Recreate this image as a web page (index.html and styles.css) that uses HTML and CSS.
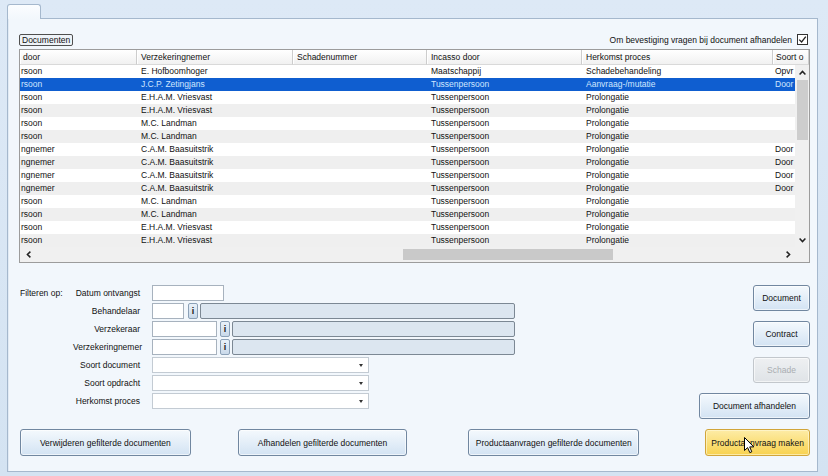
FILE: index.html
```html
<!DOCTYPE html>
<html lang="nl">
<head>
<meta charset="utf-8">
<title>Documenten</title>
<link rel="stylesheet" href="styles.css">
</head>
<body>
<div class="window">
  <div class="tabstrip"><div class="tab"></div></div>
  <div class="panel">
    <div class="grid-head">
      <span class="group-label">Documenten</span>
      <label class="confirm">Om bevestiging vragen bij document afhandelen
        <span class="checkbox"><svg width="9" height="9" viewBox="0 0 9 9"><path d="M1.2 4.6 L3.6 7 L7.8 1.6" fill="none" stroke="#222" stroke-width="1.3"/></svg></span>
      </label>
    </div>

    <div class="datagrid">
      <div class="dg-header">
        <div class="first">door</div>
        <div>Verzekeringnemer</div>
        <div>Schadenummer</div>
        <div>Incasso door</div>
        <div>Herkomst proces</div>
        <div class="last">Soort o</div>
      </div>
      <div class="dg-body">
        <div class="dg-rows">
          <div class="row"><span>rsoon</span><span>E. Hofboomhoger</span><span></span><span>Maatschappij</span><span>Schadebehandeling</span><span>Opvr</span></div>
          <div class="row sel"><span>rsoon</span><span>J.C.P. Zetingjans</span><span></span><span>Tussenpersoon</span><span>Aanvraag-/mutatie</span><span>Door</span></div>
          <div class="row"><span>rsoon</span><span>E.H.A.M. Vriesvast</span><span></span><span>Tussenpersoon</span><span>Prolongatie</span><span></span></div>
          <div class="row"><span>rsoon</span><span>E.H.A.M. Vriesvast</span><span></span><span>Tussenpersoon</span><span>Prolongatie</span><span></span></div>
          <div class="row"><span>rsoon</span><span>M.C. Landman</span><span></span><span>Tussenpersoon</span><span>Prolongatie</span><span></span></div>
          <div class="row"><span>rsoon</span><span>M.C. Landman</span><span></span><span>Tussenpersoon</span><span>Prolongatie</span><span></span></div>
          <div class="row"><span>ngnemer</span><span>C.A.M. Baasuitstrik</span><span></span><span>Tussenpersoon</span><span>Prolongatie</span><span>Door</span></div>
          <div class="row"><span>ngnemer</span><span>C.A.M. Baasuitstrik</span><span></span><span>Tussenpersoon</span><span>Prolongatie</span><span>Door</span></div>
          <div class="row"><span>ngnemer</span><span>C.A.M. Baasuitstrik</span><span></span><span>Tussenpersoon</span><span>Prolongatie</span><span>Door</span></div>
          <div class="row"><span>ngnemer</span><span>C.A.M. Baasuitstrik</span><span></span><span>Tussenpersoon</span><span>Prolongatie</span><span>Door</span></div>
          <div class="row"><span>rsoon</span><span>M.C. Landman</span><span></span><span>Tussenpersoon</span><span>Prolongatie</span><span></span></div>
          <div class="row"><span>rsoon</span><span>M.C. Landman</span><span></span><span>Tussenpersoon</span><span>Prolongatie</span><span></span></div>
          <div class="row"><span>rsoon</span><span>E.H.A.M. Vriesvast</span><span></span><span>Tussenpersoon</span><span>Prolongatie</span><span></span></div>
          <div class="row"><span>rsoon</span><span>E.H.A.M. Vriesvast</span><span></span><span>Tussenpersoon</span><span>Prolongatie</span><span></span></div>
        </div>
        <div class="vscroll">
          <div class="arrow"><svg width="7" height="5" viewBox="0 0 7 5"><path d="M0.6 4.4 L3.5 1.4 L6.4 4.4" fill="none" stroke="#222" stroke-width="1.5"/></svg></div>
          <div class="vtrack"><div class="vthumb"></div></div>
          <div class="arrow"><svg width="7" height="5" viewBox="0 0 7 5"><path d="M0.6 0.6 L3.5 3.6 L6.4 0.6" fill="none" stroke="#222" stroke-width="1.5"/></svg></div>
        </div>
      </div>
      <div class="hscroll">
        <div class="harrow left"><svg width="5" height="7" viewBox="0 0 5 7"><path d="M4.4 0.6 L1.4 3.5 L4.4 6.4" fill="none" stroke="#222" stroke-width="1.5"/></svg></div>
        <div class="htrack"><div class="hthumb"></div></div>
        <div class="harrow"><svg width="5" height="7" viewBox="0 0 5 7"><path d="M0.6 0.6 L3.6 3.5 L0.6 6.4" fill="none" stroke="#222" stroke-width="1.5"/></svg></div>
        <div class="corner"></div>
      </div>
    </div>

    <div class="filters">
      <div class="filter-form">
        <span class="filter-title">Filteren op:</span>
        <span class="flabel">Datum ontvangst</span>
        <div class="ctrl"><span class="field date"></span></div>

        <span class="flabel">Behandelaar</span>
        <div class="ctrl lookup"><span class="field short"></span><span class="ibtn">i</span><span class="readonly"></span></div>

        <span class="flabel">Verzekeraar</span>
        <div class="ctrl lookup"><span class="field mid"></span><span class="ibtn">i</span><span class="readonly"></span></div>

        <span class="flabel">Verzekeringnemer</span>
        <div class="ctrl lookup"><span class="field mid"></span><span class="ibtn">i</span><span class="readonly"></span></div>

        <span class="flabel">Soort document</span>
        <div class="ctrl"><span class="combo"><span class="caret"></span></span></div>

        <span class="flabel">Soort opdracht</span>
        <div class="ctrl"><span class="combo"><span class="caret"></span></span></div>

        <span class="flabel">Herkomst proces</span>
        <div class="ctrl"><span class="combo"><span class="caret"></span></span></div>
      </div>

      <div class="side-buttons">
        <button class="btn btn-small">Document</button>
        <button class="btn btn-small">Contract</button>
        <button class="btn btn-small" disabled>Schade</button>
        <button class="btn btn-afh">Document afhandelen</button>
      </div>
    </div>

    <div class="bottom-buttons">
      <button class="btn btn-bottom">Verwijderen gefilterde documenten</button>
      <button class="btn btn-bottom gap-a">Afhandelen gefilterde documenten</button>
      <button class="btn btn-bottom gap-b">Productaanvragen gefilterde documenten</button>
      <button class="btn btn-hot gap-c">Productaanvraag maken
        <svg class="cursor" width="11" height="17" viewBox="0 0 11 17"><path d="M0.5 0.5 L0.5 13.5 L3.6 10.6 L5.8 15.6 L7.8 14.8 L5.7 9.9 L9.8 9.9 Z" fill="#fff" stroke="#000" stroke-width="1"/></svg>
      </button>
    </div>
  </div>
</div>
</body>
</html>
```

FILE: styles.css
```css
* { box-sizing: border-box; }
html, body { margin: 0; padding: 0; }
body {
  width: 828px;
  height: 476px;
  overflow: hidden;
  font-family: "Liberation Sans", Arial, sans-serif;
  font-size: 8.5px;
  color: #111;
  background: #d9e7f5;
}

.window {
  height: 476px;
  padding-top: 4px;
  background: linear-gradient(#dde9f6, #d4e3f2);
}

.tabstrip {
  display: flex;
  height: 14px;
  padding-left: 7px;
}
.tab {
  position: relative;
  z-index: 1;
  width: 34px;
  height: 15px;
  border: 1px solid #a5b8cd;
  border-bottom: none;
  border-radius: 3px 3px 0 0;
  background: linear-gradient(#fbfdff, #f2f7fc);
}

.panel {
  margin: 0 10px 0 7px;
  border: 1px solid #a5b8cd;
  background: #f2f7fc;
  padding: 15px 7px 15px 11px;
  box-shadow: inset 1px 0 0 #e2ebf5;
}

/* top line above grid */
.grid-head {
  display: flex;
  justify-content: space-between;
  align-items: center;
  height: 11px;
}
.group-label {
  height: 12px;
  line-height: 10px;
  padding: 0 2px;
  border: 1px solid #4f4f4f;
  border-radius: 2px;
  background: #eef3f8;
}
.confirm {
  display: flex;
  align-items: center;
  gap: 5px;
  margin-right: 2px;
}
.checkbox {
  display: flex;
  align-items: center;
  justify-content: center;
  width: 11px;
  height: 11px;
  border: 1px solid #333;
  background: #fff;
}

/* data grid */
.datagrid {
  margin-top: 4px;
  height: 214px;
  border: 1px solid #9c9c9c;
  background: #fff;
  display: flex;
  flex-direction: column;
}
.dg-header {
  display: grid;
  grid-template-columns: 117px 156px 134px 155px 191px 1fr;
  height: 15px;
}
.dg-header div {
  padding-left: 4px;
  line-height: 14px;
  white-space: nowrap;
  overflow: hidden;
  border-right: 1px solid #cdcdcd;
  border-bottom: 1px solid #d9d9d9;
  box-shadow: inset 1px 0 0 #fff;
  background: linear-gradient(#ffffff, #f1f1f1);
}
.dg-header .first { padding-left: 3px; }
.dg-header .last { padding-left: 3px; }

.dg-body {
  display: flex;
  height: 182px;
}
.dg-rows { width: 775px; }
.row {
  display: grid;
  grid-template-columns: 117px 156px 134px 155px 191px 22px;
  height: 13px;
  line-height: 13px;
}
.row:nth-child(even) { background: #efefef; }
.row span {
  padding-left: 4px;
  white-space: nowrap;
  overflow: hidden;
}
.row span:first-child { padding-left: 1px; }
.row span:last-child { padding-left: 2px; }
.row.sel {
  background: #0f5ed0;
  color: #cfe6ff;
}

.vscroll {
  width: 14px;
  background: #f0f0f0;
  display: flex;
  flex-direction: column;
}
.arrow {
  height: 14px;
  display: flex;
  align-items: center;
  justify-content: center;
}
.vtrack { flex: 1; }
.vthumb {
  width: 11px;
  height: 60px;
  margin: 1px auto 0;
  background: #cdcdcd;
}

.hscroll {
  height: 15px;
  display: flex;
  background: #f0f0f0;
}
.harrow {
  width: 14px;
  display: flex;
  align-items: center;
  justify-content: center;
}
.harrow.left { width: 16px; }
.htrack {
  flex: 1;
  display: flex;
  align-items: center;
}
.hthumb {
  width: 210px;
  height: 11px;
  margin-left: 367px;
  background: #c9c9c9;
}
.corner { width: 14px; }

/* filters */
.filters {
  margin-top: 22px;
  padding-left: 1px;
  display: flex;
  justify-content: space-between;
  align-items: flex-start;
}
.filter-form {
  display: grid;
  grid-template-columns: 53px 79px 363px;
  grid-auto-rows: 16px;
  row-gap: 2px;
  align-items: center;
}
.filter-title { grid-column: 1; }
.flabel {
  grid-column: 2;
  text-align: right;
  padding-right: 12px;
  white-space: nowrap;
}
.ctrl {
  grid-column: 3;
  display: flex;
  height: 16px;
}
.field {
  height: 16px;
  border: 1px solid #a7b2be;
  background: #fff;
}
.field.date { width: 72px; }
.field.short { width: 32px; margin-right: 4px; }
.field.mid { width: 65px; margin-right: 3px; }
.ibtn {
  width: 10px;
  height: 16px;
  margin-right: 2px;
  border: 1px solid #8ba0b7;
  border-radius: 2px;
  background: linear-gradient(#e9f1f9, #c9d9ea);
  font-weight: bold;
  font-size: 9px;
  line-height: 14px;
  text-align: center;
  color: #1a1a1a;
}
.readonly {
  flex: 1;
  height: 16px;
  border: 1px solid #7c8894;
  border-radius: 2px;
  background: #dce6f0;
}
.combo {
  width: 217px;
  height: 16px;
  border: 1px solid #c3cbd3;
  background: #fff;
  display: flex;
  align-items: center;
  justify-content: flex-end;
  padding-right: 5px;
}
.caret {
  width: 0;
  height: 0;
  border-top: 3px solid #333;
  border-left: 2px solid transparent;
  border-right: 2px solid transparent;
}

/* buttons */
.btn {
  position: relative;
  height: 26px;
  padding: 0;
  border: 1px solid #7187a0;
  border-radius: 3px;
  background: linear-gradient(#f4f9fd, #d3e3f3);
  box-shadow: inset 0 0 0 1px rgba(255,255,255,0.6);
  font-family: "Liberation Sans", Arial, sans-serif;
  font-size: 8.5px;
  color: #111;
  white-space: nowrap;
}
.btn:disabled {
  border-color: #c2c7cc;
  background: linear-gradient(#eef0f2, #dfe3e7);
  color: #a9adb1;
}
.side-buttons {
  display: flex;
  flex-direction: column;
  align-items: flex-end;
  gap: 10px;
}
.btn-small { width: 57px; }
.btn-afh { width: 111px; }

.bottom-buttons {
  margin-top: 10px;
  padding-left: 1px;
  display: flex;
}
.btn-bottom { width: 171px; height: 27px; }
.gap-a { margin-left: 47px; width: 170px; }
.gap-b { margin-left: 61px; }
.gap-c { margin-left: 66px; }
.btn-hot {
  width: 105px;
  height: 27px;
  border-color: #d1a53a;
  background: linear-gradient(#fdeca6, #f8d24f);
  box-shadow: inset 0 0 0 1px rgba(255,250,220,0.6);
}
.cursor {
  position: absolute;
  left: 38px;
  top: 7px;
}
```
